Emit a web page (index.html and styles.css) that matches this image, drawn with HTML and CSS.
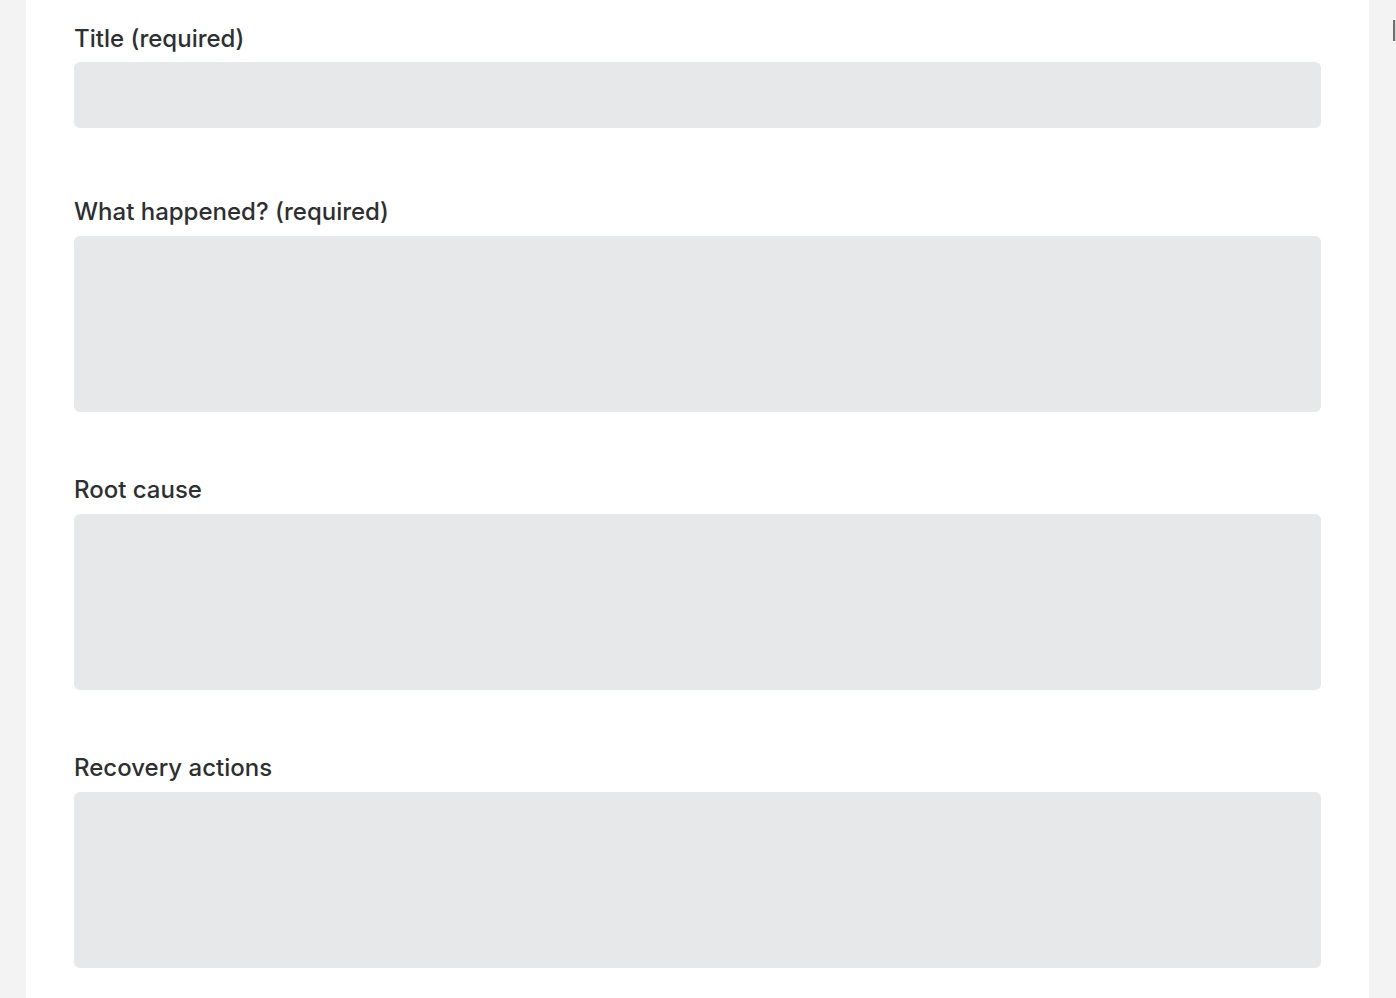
FILE: index.html
```html
<!DOCTYPE html>
<html lang="en">
<head>
<meta charset="utf-8">
<title>Incident report</title>
<link rel="stylesheet" href="styles.css">
</head>
<body>
<main class="panel">
  <form class="form">
    <div class="field field-title">
      <label class="label" for="title">Title (required)</label>
      <input class="control control-input" id="title" type="text">
    </div>
    <div class="field">
      <label class="label" for="what">What happened? (required)</label>
      <textarea class="control control-area" id="what"></textarea>
    </div>
    <div class="field">
      <label class="label" for="root">Root cause</label>
      <textarea class="control control-area" id="root"></textarea>
    </div>
    <div class="field">
      <label class="label" for="recovery">Recovery actions</label>
      <textarea class="control control-area" id="recovery"></textarea>
    </div>
  </form>
</main>
<div class="edge-tab"></div>
</body>
</html>
```

FILE: styles.css
```css
html, body {
  margin: 0;
  padding: 0;
  height: 100%;
  overflow: hidden;
}
body {
  background: #f3f3f3;
  font-family: Inter, "Noto Sans", "Liberation Sans", sans-serif;
  color: #2d2f31;
}
.panel {
  margin-left: 26px;
  width: 1343px;
  min-height: 100%;
  box-sizing: border-box;
  background: #ffffff;
  padding: 24px 48px 0 48px;
}
.form {
  display: flex;
  flex-direction: column;
  gap: 63px;
}
.field {
  display: flex;
  flex-direction: column;
}
.field-title {
  margin-bottom: 6px;
}
.label {
  font-size: 24px;
  line-height: 30px;
  font-weight: 500;
  margin-bottom: 9px;
  color: #2d2f31;
}
.field-title .label {
  margin-bottom: 8px;
}
.control {
  display: block;
  width: 100%;
  box-sizing: border-box;
  border: none;
  border-radius: 6px;
  background: #e7e8e9;
  margin: 0;
  padding: 12px 16px;
  font-family: inherit;
  font-size: 18px;
  color: #2d2f31;
  outline: none;
  resize: none;
}
.control-input {
  height: 66px;
}
.control-area {
  height: 176px;
}
.edge-tab {
  position: absolute;
  top: 20px;
  left: 1393px;
  width: 3px;
  height: 21px;
  box-sizing: border-box;
  border-left: 2px solid #707070;
  background: #d8d8d8;
}
```
